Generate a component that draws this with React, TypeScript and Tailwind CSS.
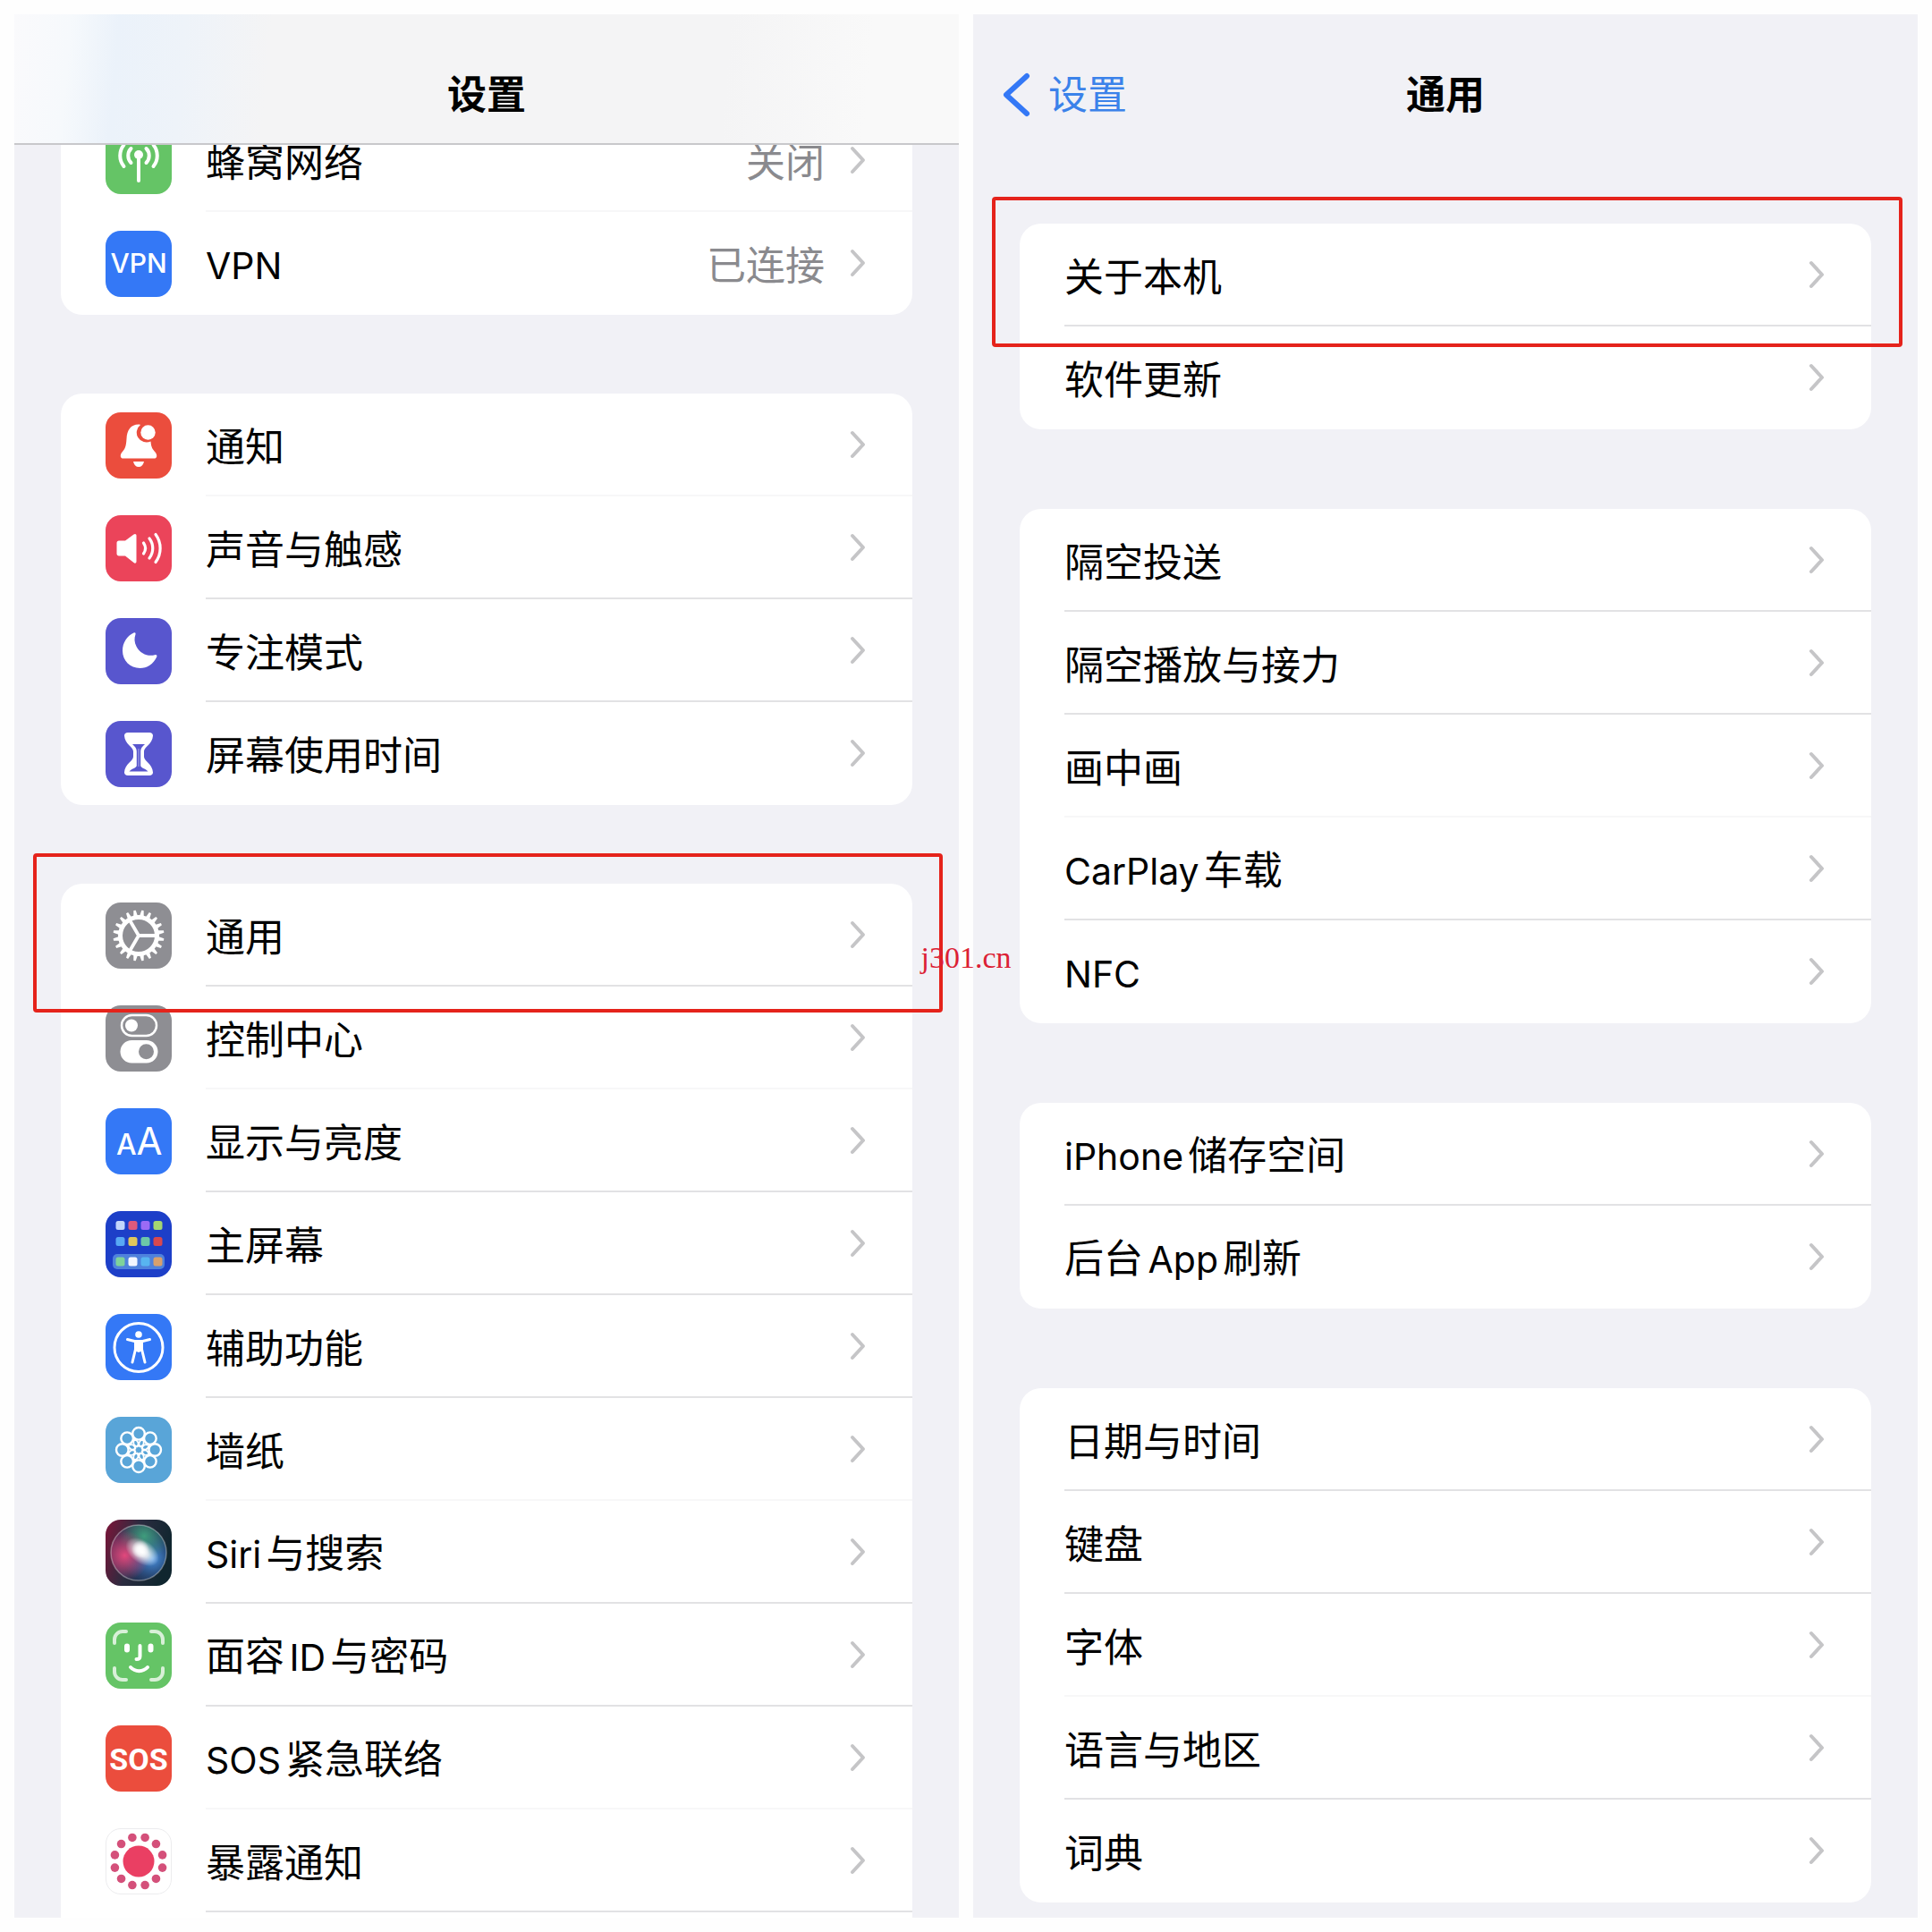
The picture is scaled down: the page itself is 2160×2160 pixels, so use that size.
import type { ReactNode } from "react";

type Item = { label: string; icon?: ReactNode; value?: string; faint?: boolean };

const homeTiles = ["#c3d6fb", "#dd5a7c", "#9b6bf5", "#a4d670", "#58a8f5", "#e0c75c", "#6cc7a8", "#d9484f"];
const dockTiles = ["#7fd39a", "#f3f7ff", "#58b4f0", "#d9a06c"];
const gearTeeth = Array.from({ length: 20 }, (_, i) => i * 18 + 9);
const petals = [0, 45, 90, 135, 180, 225, 270, 315];
const spots = Array.from({ length: 12 }, (_, i) => ((i * 30 + 15) * Math.PI) / 180);

function Tile({ color, children }: { color: string; children: ReactNode }) {
  return (
    <svg viewBox="0 0 74 74" className="h-[74px] w-[74px] shrink-0" fill="none" stroke="none" aria-hidden="true">
      <rect width="74" height="74" rx="17" fill={color} />
      {children}
    </svg>
  );
}

const CellularIcon = (
  <Tile color="#65c466">
    <g stroke="#fff" strokeWidth="4" strokeLinecap="round">
      <path d="M37 32V59" />
      <path d="M28.500 39a11.500 11.500 0 0 1 0-16M45.500 39a11.500 11.500 0 0 0 0-16" />
      <path d="M20.500 43a19 19 0 0 1 0-24M53.500 43a19 19 0 0 0 0-24" />
    </g>
    <circle cx="37" cy="30" r="5" fill="#fff" />
  </Tile>
);

const VpnIcon = (
  <Tile color="#3478f6">
    <text x="37" y="47" textAnchor="middle" fill="#fff" className="font-['Inter',sans-serif] text-[30px] font-medium">VPN</text>
  </Tile>
);

const BellIcon = (
  <Tile color="#eb4d3d">
    <path d="M37 13.500c-9 0-13 6.500-13.500 16-.500 9.500-2 11.500-5 15-2.500 3-2.500 7 1.500 7h34c4 0 4-4 1.500-7-3-3.500-4.500-5.500-5-12a11 11 0 0 1-11.500-18.600c-.7-.3-1.300-.4-2-.4z" fill="#fff" />
    <circle cx="47.500" cy="22.500" r="8.200" fill="#fff" />
    <path d="M31 55h12c-1 4-3 6-6 6s-5-2-6-6z" fill="#fff" />
  </Tile>
);

const SoundIcon = (
  <Tile color="#eb445a">
    <path d="M12.500 31c0-1.500 1-2.500 2.500-2.500h7l9.500-7c1.500-1.200 3-.5 3 1.300v29c0 1.800-1.500 2.500-3 1.300L22 45.500h-7c-1.500 0-2.500-1-2.500-2.500z" fill="#fff" />
    <g stroke="#fff" strokeWidth="3.200" strokeLinecap="round">
      <path d="M42.500 31a10.500 10.500 0 0 1 0 12" />
      <path d="M49 26a18 18 0 0 1 0 22" />
      <path d="M56 21.500a26 26 0 0 1 0 31" />
    </g>
  </Tile>
);

const MoonIcon = (
  <Tile color="#5856ce">
    <path d="M31.500 16.500c1.500-.7 2.500.3 2 1.700-1.500 4-1.500 9 1 13.500 4.500 8.500 13 11.500 20.500 9.500 2-.5 3 .7 2.200 2.300C53.500 51.500 46.500 56 38.500 56 27.500 56 19 47.500 19 36.500c0-9 5-16.500 12.500-20z" fill="#fff" />
  </Tile>
);

const HourglassIcon = (
  <Tile color="#5856ce">
    <path d="M25 13h24c2.500 0 4 1.500 4 3.500C52.500 26 43 29 43 34v6c0 5 9.500 8 10 17.500 0 2-1.500 3.500-4 3.500H25c-2.500 0-4-1.500-4-3.500C21.500 48 31 45 31 40v-6c0-5-9.500-8-10-17.500 0-2 1.500-3.500 4-3.500z" fill="#fff" />
    <path d="M30 26h14c-3 2.500-4.800 5-4.800 8v16c0 2.500 5 3 8.300 6.500h-21c3.300-3.500 8.300-4 8.300-6.500V34c0-3-1.800-5.500-4.800-8z" fill="#5856ce" />
    <path d="M37 31v20" stroke="#fff" strokeOpacity="0.500" strokeWidth="1" />
  </Tile>
);

const GearIcon = (
  <Tile color="#8e8e93">
    <circle cx="37" cy="37" r="20.500" stroke="#fff" strokeWidth="5" />
    {gearTeeth.map((angle) => (
      <path key={angle} d="M34.500 16L35.800 8.500h2.400L39.500 16z" fill="#fff" transform={`rotate(${angle} 37 37)`} />
    ))}
    <path d="M37 37H57M37 37L27 19.700M37 37L27 54.300" stroke="#fff" strokeWidth="3.800" />
  </Tile>
);

const ControlIcon = (
  <Tile color="#8e8e93">
    <rect x="18" y="11" width="39" height="23" rx="11.500" stroke="#fff" strokeWidth="2.500" />
    <circle cx="29" cy="22.500" r="7" fill="#fff" />
    <rect x="16.500" y="39" width="42" height="25.500" rx="12.750" fill="#fff" />
    <circle cx="45.500" cy="51.700" r="8.500" fill="#8e8e93" />
  </Tile>
);

const DisplayIcon = (
  <Tile color="#3478f6">
    <text x="12" y="52" fill="#fff" className="font-['Inter',sans-serif] text-[32px] font-medium">A</text>
    <text x="34.500" y="52" fill="#fff" className="font-['Inter',sans-serif] text-[42px]">A</text>
  </Tile>
);

const HomeScreenIcon = (
  <Tile color="#1d3fc8">
    {homeTiles.map((color, i) => (
      <rect key={color} x={11.500 + (i % 4) * 14} y={11 + Math.floor(i / 4) * 18} width="10" height="10" rx="2.500" fill={color} />
    ))}
    <rect x="8" y="48" width="58" height="17" rx="5" fill="#4f82dc" />
    {dockTiles.map((color, i) => (
      <rect key={color} x={11.500 + i * 14} y="51.500" width="10" height="10" rx="2.500" fill={color} />
    ))}
  </Tile>
);

const AccessibilityIcon = (
  <Tile color="#3478f6">
    <circle cx="37" cy="37.500" r="27" stroke="#fff" strokeWidth="3" />
    <circle cx="37" cy="23" r="3.800" fill="#fff" />
    <path d="M24.500 28.500l9 2.200v8.800L30 54M49.500 28.500l-9 2.200v8.800L44 54" stroke="#fff" strokeWidth="3" strokeLinecap="round" strokeLinejoin="round" />
    <path d="M32.500 29h9v12l-4.500 2-4.500-2z" fill="#fff" />
  </Tile>
);

const WallpaperIcon = (
  <Tile color="#59a5d8">
    <g stroke="#fff" strokeWidth="2.400">
      {petals.map((angle) => (
        <circle key={angle} cx="37" cy="18.800" r="6.800" transform={`rotate(${angle} 37 37)`} />
      ))}
      {petals.map((angle) => (
        <path key={angle} d="M37 24.500c-3.500 3-3.500 6 0 8.500 3.500-2.500 3.500-5.500 0-8.500z" strokeWidth="1.800" transform={`rotate(${angle + 22.5} 37 37)`} />
      ))}
      <circle cx="37" cy="37" r="4.500" strokeWidth="1.800" />
    </g>
  </Tile>
);

const SiriIcon = (
  <Tile color="url(#siri-base)">
    <defs>
      <linearGradient id="siri-base" x1="0" y1="0" x2="1" y2="0.300">
        <stop offset="0" stopColor="#7d1438" />
        <stop offset="0.500" stopColor="#2b2c40" />
        <stop offset="1" stopColor="#10262f" />
      </linearGradient>
      <radialGradient id="siri-red" cx="0.250" cy="0.550" r="0.450">
        <stop offset="0" stopColor="#e2487c" />
        <stop offset="1" stopColor="#e2487c" stopOpacity="0" />
      </radialGradient>
      <radialGradient id="siri-green" cx="0.600" cy="0.200" r="0.450">
        <stop offset="0" stopColor="#3f9c7c" />
        <stop offset="1" stopColor="#3f9c7c" stopOpacity="0" />
      </radialGradient>
      <radialGradient id="siri-blue" cx="0.750" cy="0.600" r="0.520">
        <stop offset="0" stopColor="#4b96e4" />
        <stop offset="1" stopColor="#2a4f9e" stopOpacity="0.200" />
      </radialGradient>
      <radialGradient id="siri-core">
        <stop offset="0" stopColor="#fff" />
        <stop offset="0.350" stopColor="#fff" stopOpacity="0.800" />
        <stop offset="1" stopColor="#fff" stopOpacity="0" />
      </radialGradient>
    </defs>
    <circle cx="37" cy="37" r="31" fill="url(#siri-blue)" />
    <circle cx="37" cy="37" r="31" fill="url(#siri-green)" />
    <circle cx="37" cy="37" r="31" fill="url(#siri-red)" />
    <ellipse cx="41" cy="36" rx="21" ry="13" fill="url(#siri-core)" transform="rotate(35 41 36)" />
    <circle cx="39" cy="33" r="10" fill="url(#siri-core)" />
    <circle cx="37" cy="37" r="31" stroke="#fff" strokeOpacity="0.350" strokeWidth="1.500" />
  </Tile>
);

const FaceIcon = (
  <Tile color="#65c466">
    <g stroke="#fff" strokeLinecap="round">
      <path d="M10 23v-4a9 9 0 0 1 9-9h4M51 10h4a9 9 0 0 1 9 9v4M64 51v4a9 9 0 0 1-9 9h-4M23 64h-4a9 9 0 0 1-9-9v-4" strokeOpacity="0.750" strokeWidth="4" />
      <path d="M24 26.500v4M50.500 26.500v4" strokeWidth="6" />
      <path d="M38.500 26v11.500c0 2.500-1 3.500-4 3.500" strokeWidth="4" />
      <path d="M28 50c5 5.500 14 5.500 19 0" strokeWidth="4" />
    </g>
  </Tile>
);

const SosIcon = (
  <Tile color="#eb4d3d">
    <text x="37" y="50" textAnchor="middle" fill="#fff" className="font-['Liberation_Sans_Narrow','Roboto',sans-serif] text-[34px] font-bold">SOS</text>
  </Tile>
);

const ExposureIcon = (
  <Tile color="#fff">
    <rect x="0.500" y="0.500" width="73" height="73" rx="16.500" stroke="#ececee" />
    <circle cx="37" cy="37" r="17.500" fill="#ea3f63" />
    {spots.map((angle) => (
      <circle key={angle} cx={37 + 27.500 * Math.cos(angle)} cy={37 + 27.500 * Math.sin(angle)} r="4.800" fill="#d4507a" />
    ))}
  </Tile>
);

const settingsGroups: Item[][] = [
  [
    { label: "蜂窝网络", icon: CellularIcon, value: "关闭", faint: true },
    { label: "VPN", icon: VpnIcon, value: "已连接" }
  ],
  [
    { label: "通知", icon: BellIcon, faint: true },
    { label: "声音与触感", icon: SoundIcon },
    { label: "专注模式", icon: MoonIcon },
    { label: "屏幕使用时间", icon: HourglassIcon }
  ],
  [
    { label: "通用", icon: GearIcon },
    { label: "控制中心", icon: ControlIcon, faint: true },
    { label: "显示与亮度", icon: DisplayIcon },
    { label: "主屏幕", icon: HomeScreenIcon },
    { label: "辅助功能", icon: AccessibilityIcon },
    { label: "墙纸", icon: WallpaperIcon, faint: true },
    { label: "Siri与搜索", icon: SiriIcon },
    { label: "面容ID与密码", icon: FaceIcon },
    { label: "SOS紧急联络", icon: SosIcon, faint: true },
    { label: "暴露通知", icon: ExposureIcon }
  ]
];

const generalGroups: Item[][] = [
  [{ label: "关于本机" }, { label: "软件更新" }],
  [{ label: "隔空投送" }, { label: "隔空播放与接力" }, { label: "画中画", faint: true }, { label: "CarPlay车载" }, { label: "NFC" }],
  [{ label: "iPhone储存空间" }, { label: "后台App刷新" }],
  [{ label: "日期与时间" }, { label: "键盘" }, { label: "字体", faint: true }, { label: "语言与地区" }, { label: "词典" }]
];

// Latin runs are set a little smaller than the Chinese around them
function Label({ text }: { text: string }) {
  return text.split(/([A-Za-z]+)/).map((part, i) => (i % 2 ? <span key={i} className="text-[41px]">{part}</span> : part));
}

function Row({ item, divider }: { item: Item; divider: boolean }) {
  const line = !divider ? "border-transparent" : item.faint ? "border-[#f7f7f8]" : "border-[#e2e2e4]";
  return (
    <li>
      <a href="#" className="flex h-[115px] items-stretch gap-[38px] pl-[50px]">
        {item.icon ? <span className="flex items-center">{item.icon}</span> : null}
        <span className={`flex min-w-0 flex-1 items-center border-b-2 pr-[52px] ${line}`}>
          <span className="flex-1 pt-1.5 text-black"><Label text={item.label} /></span>
          {item.value ? <span className="pt-1.5 pr-7 text-[#8a8a8e]">{item.value}</span> : null}
          <svg viewBox="0 0 18 32" className="h-8 w-[18px] shrink-0" fill="none" stroke="#c5c5c7" strokeWidth="4" strokeLinecap="round" strokeLinejoin="round" aria-hidden="true">
            <path d="M3 3L15 16L3 29" />
          </svg>
        </span>
      </a>
    </li>
  );
}

function Group({ items, open = false, mark }: { items: Item[]; open?: boolean; mark?: string }) {
  return (
    <section className={`relative bg-white ${open ? "grow rounded-t-[24px]" : "rounded-[24px]"}`}>
      <ul>
        {items.map((item, i) => (
          <Row key={item.label} item={item} divider={open || i < items.length - 1} />
        ))}
      </ul>
      {mark ? <div className={`pointer-events-none absolute rounded-[4px] border-4 border-[#e5231b] ${mark}`} /> : null}
    </section>
  );
}

function SettingsPanel() {
  return (
    <section className="flex flex-1 flex-col overflow-hidden bg-[#f1f1f6]">
      <header className="relative z-10 flex h-[146px] items-end justify-center border-b-2 border-[#c8c8cb] bg-[linear-gradient(95deg,#fafafc_0%,#f6f9fc_6%,#ebf2fa_11%,#eef3f9_18%,#f4f4f5_27%,#f4f4f5_75%,#f9f9f9_90%)] pb-6">
        <h1 className="font-bold">设置</h1>
      </header>
      <div className="-mt-10 flex grow flex-col gap-[88px] px-[52px]">
        <Group items={settingsGroups[0]} />
        <Group items={settingsGroups[1]} />
        <Group items={settingsGroups[2]} open mark="-left-[31px] -right-[34px] -top-[34px] h-[178px]" />
      </div>
    </section>
  );
}

function GeneralPanel() {
  return (
    <section className="flex flex-1 flex-col bg-[#f1f1f6]">
      <header className="grid h-[146px] grid-cols-3 items-end pb-[26px]">
        <a href="#" className="flex items-center gap-5 pl-8 text-[#3b82ea]">
          <svg viewBox="0 0 32 50" className="h-[50px] w-8" fill="none" stroke="#3478f6" strokeWidth="6" strokeLinecap="round" strokeLinejoin="round" aria-hidden="true">
            <path d="M28 4L5 25L28 46" />
          </svg>
          设置
        </a>
        <h1 className="text-center font-bold">通用</h1>
      </header>
      <div className="flex flex-col gap-[89px] px-[52px] pt-[88px]">
        {generalGroups.map((items, i) => (
          <Group key={items[0].label} items={items} mark={i === 0 ? "-left-[31px] -right-[35px] -top-[30px] h-[168px]" : undefined} />
        ))}
      </div>
    </section>
  );
}

export default function App() {
  return (
    <main className="relative flex min-h-screen gap-4 bg-[#fefefe] p-4 font-['Inter','Noto_Sans_CJK_SC',sans-serif] text-[44px] leading-[60px] [text-autospace:normal]" lang="zh-CN">
      <SettingsPanel />
      <GeneralPanel />
      <p className="absolute inset-x-0 top-[1051px] text-center font-['Liberation_Serif',serif] text-[34px] leading-[40px] text-[#dc1f35]">j301.cn</p>
    </main>
  );
}
